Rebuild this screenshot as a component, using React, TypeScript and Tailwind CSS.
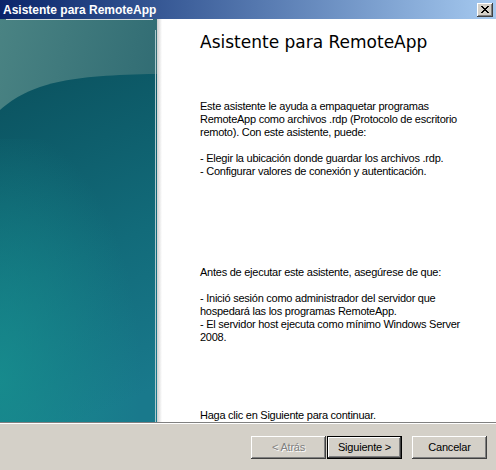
import { ReactNode } from 'react'

const font = { fontFamily: '"Liberation Sans", Arial, sans-serif' }

function WizardArt() {
  return (
    <svg width="157" height="403" viewBox="0 0 157 403" className="block">
      <defs>
        <linearGradient id="upper" x1="0" y1="0" x2="1" y2="0.6">
          <stop offset="0" stopColor="#4a8383" />
          <stop offset="1" stopColor="#2b6770" />
        </linearGradient>
        <linearGradient id="lower" x1="0.3" y1="0" x2="0.5" y2="1">
          <stop offset="0" stopColor="#0b5461" />
          <stop offset="0.55" stopColor="#126b7a" />
          <stop offset="1" stopColor="#19798c" />
        </linearGradient>
        <radialGradient id="glow" cx="0" cy="0.85" r="0.9">
          <stop offset="0" stopColor="#17908f" stopOpacity="0.8" />
          <stop offset="1" stopColor="#17908f" stopOpacity="0" />
        </radialGradient>
      </defs>
      <rect width="157" height="403" fill="url(#upper)" />
      <path d="M0,91 C30,64 70,56 157,55 L157,403 L0,403 Z" fill="url(#lower)" />
      <rect y="120" width="157" height="283" fill="url(#glow)" />
      <rect x="6" y="0" width="147" height="1" fill="#d6dcdc" />
      <rect x="155" y="11" width="1" height="392" fill="#a9c7cb" />
    </svg>
  )
}

function Button({ children, primary, disabled }: { children: ReactNode; primary?: boolean; disabled?: boolean }) {
  const edge = primary
    ? 'shadow-[inset_0_0_0_1px_#000,inset_-2px_-2px_#404040,inset_2px_2px_#fff,inset_-3px_-3px_#808080]'
    : 'shadow-[inset_-1px_-1px_#404040,inset_1px_1px_#fff,inset_-2px_-2px_#808080]'
  return (
    <div
      className={`w-[75px] h-[23px] flex items-center justify-center bg-[#d4d0c8] text-[11px] tracking-[-0.2px] ${edge} ${
        disabled ? 'text-[#808080] [text-shadow:1px_1px_0_#fff]' : 'text-black'
      }`}
      style={font}
    >
      {children}
    </div>
  )
}

function Lines({ lines, className = '' }: { lines: string[]; className?: string }) {
  return (
    <div className={`text-[11px] leading-[13px] tracking-[-0.25px] text-black whitespace-pre ${className}`} style={font}>
      {lines.map((l, i) => (
        <div key={i} className="h-[13px]">
          {l}
        </div>
      ))}
    </div>
  )
}

export default function App() {
  return (
    <div className="w-[496px] h-[470px] bg-[#d4d0c8] flex flex-col overflow-hidden">
      {/* Title bar */}
      <div className="h-[19px] flex items-center justify-between pl-[3px] pr-[3px] bg-gradient-to-r from-[#0a246a] to-[#a6caf0]">
        <span className="text-white font-bold text-[12px] leading-none" style={font}>
          Asistente para RemoteApp
        </span>
        <div className="w-[16px] h-[14px] bg-[#d4d0c8] flex items-center justify-center shadow-[inset_-1px_-1px_#404040,inset_1px_1px_#fff,inset_-2px_-2px_#808080]">
          <svg width="8" height="7" viewBox="0 0 8 7">
            <path d="M0,0h2v1h1v1h2v-1h1v-1h2v1h-1v1h-1v1h-1v1h1v1h1v1h1v1h-2v-1h-1v-1h-2v1h-1v1h-2v-1h1v-1h1v-1h1v-1h-1v-1h-1v-1h-1z" fill="#000" />
          </svg>
        </div>
      </div>

      {/* Body */}
      <div className="h-[403px] flex bg-white">
        <WizardArt />
        <div className="w-[5px] bg-gradient-to-r from-[#cfcfcf] to-white" />
        <div className="flex flex-col pl-[38px]">
          <h1
            className="mt-[13px] text-[17px] leading-[20px] text-black whitespace-nowrap"
            style={{ fontFamily: '"DejaVu Sans", Verdana, sans-serif' }}
          >
            Asistente para RemoteApp
          </h1>
          <Lines
            className="mt-[48px]"
            lines={[
              'Este asistente le ayuda a empaquetar programas',
              'RemoteApp como archivos .rdp (Protocolo de escritorio',
              'remoto). Con este asistente, puede:',
              '',
              '- Elegir la ubicación donde guardar los archivos .rdp.',
              '- Configurar valores de conexión y autenticación.',
            ]}
          />
          <Lines
            className="mt-[88px]"
            lines={[
              'Antes de ejecutar este asistente, asegúrese de que:',
              '',
              '- Inició sesión como administrador del servidor que',
              'hospedará las los programas RemoteApp.',
              '- El servidor host ejecuta como mínimo Windows Server',
              '2008.',
            ]}
          />
          <Lines className="mt-[65px]" lines={['Haga clic en Siguiente para continuar.']} />
        </div>
      </div>

      {/* Separator */}
      <div className="h-px bg-[#808080]" />
      <div className="h-px bg-white" />

      {/* Buttons */}
      <div className="flex justify-end items-start pt-[12px] pr-[9px]">
        <Button disabled>&lt; Atrás</Button>
        <div className="ml-px">
          <Button primary>Siguiente &gt;</Button>
        </div>
        <div className="ml-[10px]">
          <Button>Cancelar</Button>
        </div>
      </div>
    </div>
  )
}
